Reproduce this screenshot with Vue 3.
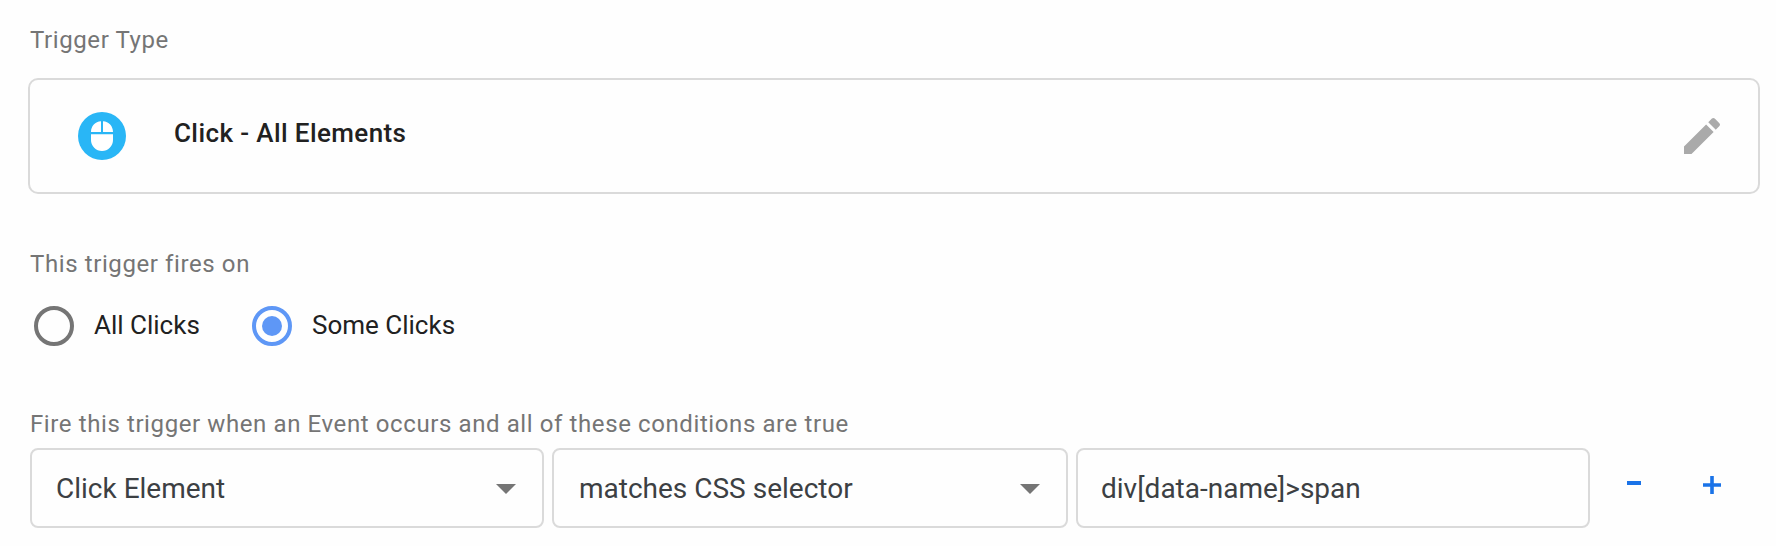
<script setup>
import { ref } from 'vue'

const fires = ref('some')
const options = [
  { value: 'all', label: 'All Clicks' },
  { value: 'some', label: 'Some Clicks' },
]
</script>

<template>
  <main class="panel">
    <div class="label">Trigger Type</div>
    <section class="card">
      <svg class="type-icon" viewBox="0 0 48 48">
        <circle cx="24" cy="24" r="24" fill="#29b6f6" />
        <path fill="#fff" d="M23 9.3V20H13c0-5.8 4.2-10.3 10-10.7zM25 9.3c5.800.4 10 4.900 10 10.700H25zM13 22.300h22V28a11 11 0 0 1-22 0z" />
      </svg>
      <span class="type-name">Click - All Elements</span>
      <svg class="edit" viewBox="0 0 24 24">
        <path fill="#aaa" d="M3 17.250V21h3.750L17.810 9.940l-3.750-3.750L3 17.250zM20.710 7.040a1 1 0 0 0 0-1.410l-2.340-2.340a1 1 0 0 0-1.410 0l-1.830 1.830 3.750 3.750 1.830-1.830z" />
      </svg>
    </section>

    <div class="label fires">This trigger fires on</div>
    <div class="radios" role="radiogroup">
      <div v-for="o in options" :key="o.value" class="radio" role="radio" :aria-checked="fires === o.value" @click="fires = o.value">
        <span class="ring" :class="{ on: fires === o.value }"></span>
        <span class="radio-text">{{ o.label }}</span>
      </div>
    </div>

    <div class="label when">Fire this trigger when an Event occurs and all of these conditions are true</div>
    <div class="row">
      <div class="field">
        <span>Click Element</span>
        <svg class="arrow" viewBox="0 0 20 10"><path d="M0 0h20L10 10z" fill="#757575" /></svg>
      </div>
      <div class="field operator">
        <span>matches CSS selector</span>
        <svg class="arrow" viewBox="0 0 20 10"><path d="M0 0h20L10 10z" fill="#757575" /></svg>
      </div>
      <div class="field value"><span>div[data-name]&gt;span</span></div>
      <svg class="minus" viewBox="0 0 14 4"><path d="M0 0h14v4H0z" fill="#1a73e8" /></svg>
      <svg class="plus" viewBox="0 0 18 18"><path d="M7.200 0h3.600v7.200H18v3.600h-7.200V18H7.200v-7.200H0V7.200h7.200z" fill="#1a73e8" /></svg>
    </div>
  </main>
</template>

<style>
body { background: #fefefe; }
</style>

<style scoped>
.panel {
  box-sizing: border-box;
  width: 1776px;
  height: 546px;
  padding: 24px 16px 0 28px;
  font-family: Roboto, "Liberation Sans", sans-serif;
  background: #fefefe;
  overflow: hidden;
}
.label {
  height: 32px;
  padding-left: 2px;
  font-size: 24px;
  line-height: 32px;
  letter-spacing: 0.6px;
  color: #757575;
  white-space: nowrap;
}
.card {
  box-sizing: border-box;
  display: flex;
  align-items: flex-start;
  height: 116px;
  margin-top: 22px;
  padding: 32px 32px 0 48px;
  border: 2px solid #dadada;
  border-radius: 10px;
  background: #fefefe;
}
.type-icon { width: 48px; height: 48px; }
.type-name {
  margin-left: 48px;
  font-size: 26px;
  font-weight: 500;
  line-height: 42px;
  letter-spacing: 0.4px;
  color: #212121;
}
.edit { width: 48px; height: 48px; margin-left: auto; }
.fires { margin-top: 54px; }
.radios {
  display: flex;
  height: 40px;
  margin-top: 26px;
  padding-left: 6px;
}
.radio { display: flex; align-items: flex-start; width: 218px; }
.ring {
  box-sizing: border-box;
  display: flex;
  align-items: center;
  justify-content: center;
  width: 40px;
  height: 40px;
  border: 4px solid #757575;
  border-radius: 50%;
}
.ring.on { border-color: #5e97f6; }
.ring.on::after {
  content: "";
  width: 20px;
  height: 20px;
  border-radius: 50%;
  background: #5e97f6;
}
.radio-text {
  margin-left: 20px;
  font-size: 26px;
  line-height: 38px;
  color: #212121;
  white-space: nowrap;
}
.when { margin-top: 62px; }
.row { display: flex; gap: 8px; margin: 8px 0 0 2px; height: 80px; }
.field {
  box-sizing: border-box;
  display: flex;
  justify-content: space-between;
  width: 514px;
  height: 80px;
  padding: 0 26px 0 24px;
  border: 2px solid #dadada;
  border-radius: 8px;
  background: #fefefe;
  font-size: 28px;
  line-height: 78px;
  color: #3c4043;
  white-space: nowrap;
}
.operator { width: 516px; padding-left: 25px; }
.value { padding-left: 23px; }
.arrow { width: 20px; height: 10px; margin-top: 34px; }
.minus { width: 14px; height: 4px; margin: 33px 0 0 29px; }
.plus { width: 18px; height: 18px; margin: 28px 0 0 54px; }
</style>
